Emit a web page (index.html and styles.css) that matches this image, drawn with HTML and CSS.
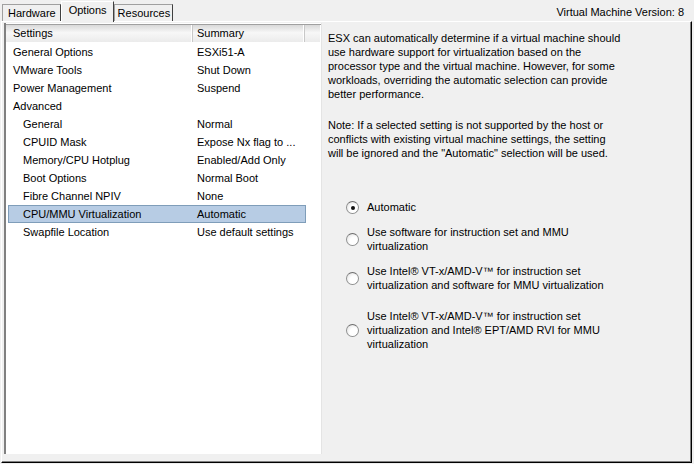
FILE: index.html
```html
<!DOCTYPE html>
<html lang="en">
<head>
    <meta charset="UTF-8">
    <title>Virtual Machine Properties - Options</title>
    <link rel="stylesheet" href="styles.css">
</head>
<body>
    <div class="window">
        <div class="topbar">
            <div class="tabs">
                <div class="tab hw">Hardware</div>
                <div class="tab active">Options</div>
                <div class="tab res">Resources</div>
            </div>
            <div class="version">Virtual Machine Version: 8</div>
        </div>
        <div class="panel">
            <div class="list">
                <div class="head">
                    <div class="col name">Settings</div>
                    <div class="col value">Summary</div>
                    <div class="col filler"></div>
                </div>
                <div class="row"><span class="name">General Options</span><span class="value">ESXi51-A</span></div>
                <div class="row"><span class="name">VMware Tools</span><span class="value">Shut Down</span></div>
                <div class="row"><span class="name">Power Management</span><span class="value">Suspend</span></div>
                <div class="row"><span class="name">Advanced</span><span class="value"></span></div>
                <div class="row sub"><span class="name">General</span><span class="value">Normal</span></div>
                <div class="row sub"><span class="name">CPUID Mask</span><span class="value">Expose Nx flag to ...</span></div>
                <div class="row sub"><span class="name">Memory/CPU Hotplug</span><span class="value">Enabled/Add Only</span></div>
                <div class="row sub"><span class="name">Boot Options</span><span class="value">Normal Boot</span></div>
                <div class="row sub"><span class="name">Fibre Channel NPIV</span><span class="value">None</span></div>
                <div class="row sub selected"><span class="name">CPU/MMU Virtualization</span><span class="value">Automatic</span></div>
                <div class="row sub"><span class="name">Swapfile Location</span><span class="value">Use default settings</span></div>
            </div>
            <div class="detail">
                <p>ESX can automatically determine if a virtual machine should<br>use hardware support for virtualization based on the<br>processor type and the virtual machine. However, for some<br>workloads, overriding the automatic selection can provide<br>better performance.</p>
                <p>Note: If a selected setting is not supported by the host or<br>conflicts with existing virtual machine settings, the setting<br>will be ignored and the "Automatic" selection will be used.</p>
                <div class="options">
                    <label class="option"><span class="radio checked"></span><span>Automatic</span></label>
                    <label class="option"><span class="radio"></span><span>Use software for instruction set and MMU<br>virtualization</span></label>
                    <label class="option"><span class="radio"></span><span>Use Intel® VT-x/AMD-V™ for instruction set<br>virtualization and software for MMU virtualization</span></label>
                    <label class="option spaced"><span class="radio"></span><span>Use Intel® VT-x/AMD-V™ for instruction set<br>virtualization and Intel® EPT/AMD RVI for MMU<br>virtualization</span></label>
                </div>
            </div>
        </div>
    </div>
</body>
</html>
```
FILE: styles.css
```css
body{
    margin: 0;
    padding: 0;
    background: #f0f0f0;
    font-family: "Liberation Sans", Arial, sans-serif;
    font-size: 11px;
    color: #000;
}
.window{
    width: 694px;
    height: 464px;
    box-sizing: border-box;
    display: flex;
    flex-direction: column;
}
.topbar{
    display: flex;
    justify-content: space-between;
    align-items: flex-end;
    height: 21px;
    padding-left: 2px;
}
.tabs{
    display: flex;
    align-items: flex-end;
}
.tab{
    height: 16px;
    line-height: 17px;
    padding: 0 5px;
    border: 1px solid #a0a0a0;
    border-bottom: none;
    border-right-color: #404040;
    background: #f0f0f0;
}
.tab.hw{
    padding: 0 4px 0 5px;
}
.tab.res{
    padding: 0 2px 0 3px;
}
.tab.active{
    height: 20px;
    line-height: 16px;
    padding: 0 6px 0 7px;
    border-color: #fff;
    border-right-color: #404040;
    position: relative;
    top: 1px;
    z-index: 1;
}
.version{
    align-self: center;
    padding-right: 10px;
    padding-top: 2px;
}
.panel{
    flex: 1;
    display: flex;
    margin: 0 2px 1px 1px;
    border: 1px solid;
    border-color: #fff #000 #000 #fff;
    box-shadow: inset -1px -1px 0 #808080;
    padding: 1px 2px 8px 2px;
}
.list{
    width: 315px;
    background: #fff;
    border-left: 2px solid #808080;
    border-right: 1px solid #e4e4e4;
    padding-top: 1px;
}
.head{
    display: flex;
    height: 17px;
    line-height: 17px;
    border-top: 1px solid #a0a0a0;
    background: linear-gradient(#d9d9d9, #f7f7f7 45%, #ebebeb);
    margin-bottom: 1px;
}
.col{
    border-right: 1px solid #c8c8c8;
    box-shadow: inset -1px 0 0 #fff;
}
.head .name{
    width: 179px;
    padding-left: 7px;
}
.head .value{
    width: 107px;
    padding-left: 4px;
}
.head .filler{
    flex: 1;
    border-right: none;
}
.row{
    display: flex;
    height: 18px;
    line-height: 18px;
    box-sizing: border-box;
}
.row .name{
    width: 184px;
    padding-left: 7px;
    flex: none;
}
.row.sub .name{
    padding-left: 17px;
    width: 174px;
}
.row .value{
    width: 110px;
    white-space: nowrap;
}
.row.selected{
    background: #b7cce4;
    border: 1px solid #7f9db9;
    line-height: 16px;
    margin: 0 15px 0 2px;
}
.row.selected .name{
    padding-left: 14px;
    width: 174px;
}
.detail{
    flex: 1;
    padding: 8px 0 0 6px;
    line-height: 14px;
    white-space: nowrap;
}
.detail p{
    margin: 0 0 17px 0;
}
.options{
    margin-top: 40px;
    display: flex;
    flex-direction: column;
    gap: 11px;
}
.option{
    display: flex;
    align-items: center;
    gap: 8px;
    padding-left: 18px;
}
.option.spaced{
    margin-top: 6px;
}
.radio{
    width: 11px;
    height: 11px;
    border-radius: 50%;
    border: 1px solid #8e8f8f;
    border-top-color: #6d6d6d;
    background: radial-gradient(circle at 65% 65%, #fff 40%, #dcdcdc);
    position: relative;
    flex: none;
}
.radio.checked::after{
    content: "";
    position: absolute;
    left: 4px;
    top: 4px;
    width: 4px;
    height: 4px;
    border-radius: 50%;
    background: #111;
}
```
